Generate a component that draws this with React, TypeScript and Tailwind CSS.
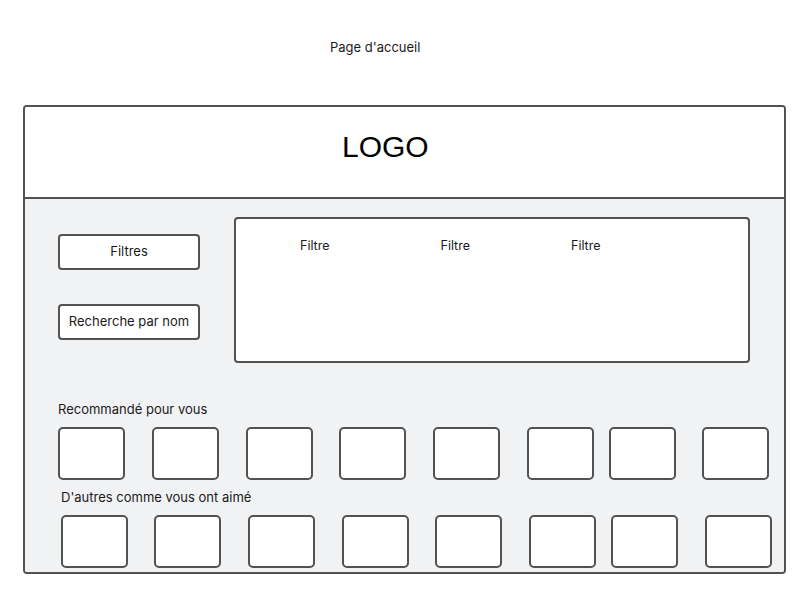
const gapsTop = ["", "ml-[27px]", "ml-[27px]", "ml-[26px]", "ml-[27px]", "ml-[27px]", "ml-[15px]", "ml-[26px]"]
const gapsBottom = ["", "ml-[26px]", "ml-[27px]", "ml-[27px]", "ml-[26px]", "ml-[27px]", "ml-[15px]", "ml-[27px]"]

function Tile({ gap }: { gap: string }) {
  return <div className={`${gap} w-[67px] h-[53px] shrink-0 rounded-[5px] border-2 border-[#525252] bg-white`} />
}

function Button({ label }: { label: string }) {
  return (
    <div className="w-[142px] h-[36px] flex items-center justify-center rounded-[4px] border-2 border-[#525252] bg-white text-[13px] text-[#1a1a1a]">
      {label}
    </div>
  )
}

export default function App() {
  return (
    <div className="w-[808px] h-[597px] bg-white font-['Inter',sans-serif] text-[#1a1a1a]">
      <p className="pt-[39px] pl-[330px] text-[13px] leading-[16px]">Page d'accueil</p>

      <div className="mt-[50px] ml-[23px] w-[763px] rounded-[4px] border-2 border-[#525252] overflow-hidden">
        {/* header */}
        <div className="h-[92px] flex items-start pt-[25px] pl-[317px] bg-white border-b-2 border-[#525252]">
          <span className="font-['Liberation_Sans',sans-serif] text-[30px] leading-none text-black">LOGO</span>
        </div>

        {/* body */}
        <div className="bg-[#f1f2f4] pt-[18px] pb-[4px]">
          <div className="flex">
            <div className="flex flex-col gap-[34px] pl-[33px] pt-[17px]">
              <Button label="Filtres" />
              <Button label="Recherche par nom" />
            </div>
            <div className="ml-[34px] w-[516px] h-[146px] rounded-[4px] border-2 border-[#525252] bg-white flex items-start pt-[19px] pl-[64px] text-[12.5px] leading-[16px]">
              <span>Filtre</span>
              <span className="ml-[111px]">Filtre</span>
              <span className="ml-[101px]">Filtre</span>
            </div>
          </div>

          <p className="mt-[38px] pl-[33px] text-[13px] leading-[16px]">Recommandé pour vous</p>
          <div className="mt-[10px] flex pl-[33px]">
            {gapsTop.map((g, i) => (
              <Tile key={i} gap={g} />
            ))}
          </div>

          <p className="mt-[9px] pl-[36px] text-[13px] leading-[16px]">D'autres comme vous ont aimé</p>
          <div className="mt-[10px] flex pl-[36px]">
            {gapsBottom.map((g, i) => (
              <Tile key={i} gap={g} />
            ))}
          </div>
        </div>
      </div>
    </div>
  )
}
